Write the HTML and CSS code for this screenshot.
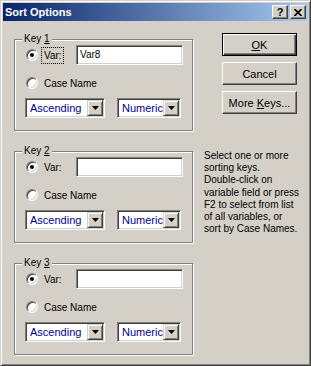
FILE: index.html
```html
<!DOCTYPE html>
<html lang="en">
<head>
    <meta charset="UTF-8">
    <meta name="viewport" content="width=device-width, initial-scale=1.0">
    <title>Sort Options</title>
    <link rel="stylesheet" href="styles.css">
</head>
<body>
    <div class="window">
        <div class="titlebar">
            <span class="title">Sort Options</span>
            <div class="caption-buttons">
                <span class="cap-btn help">?</span>
                <span class="cap-btn close">
                    <svg width="8" height="7" viewBox="0 0 8 7"><path d="M0.5 0 L7.5 7 M7.5 0 L0.5 7" stroke="#000" stroke-width="1.7"/></svg>
                </span>
            </div>
        </div>

        <div class="body">
            <div class="keys">
                <div class="group">
                    <span class="group-title">Key <u>1</u></span>
                    <div class="row">
                        <span class="radio checked"></span>
                        <span class="label focus">Var:</span>
                        <span class="textbox">Var8</span>
                    </div>
                    <div class="row">
                        <span class="radio"></span>
                        <span class="label">Case Name</span>
                    </div>
                    <div class="row combos">
                        <div class="combo wide">
                            <span class="combo-text">Ascending</span>
                            <span class="combo-btn"><svg width="7" height="4" viewBox="0 0 7 4"><path d="M0 0 H7 L3.5 4 Z" fill="#000"/></svg></span>
                        </div>
                        <div class="combo narrow">
                            <span class="combo-text">Numeric</span>
                            <span class="combo-btn"><svg width="7" height="4" viewBox="0 0 7 4"><path d="M0 0 H7 L3.5 4 Z" fill="#000"/></svg></span>
                        </div>
                    </div>
                </div>

                <div class="group">
                    <span class="group-title">Key <u>2</u></span>
                    <div class="row">
                        <span class="radio checked"></span>
                        <span class="label">Var:</span>
                        <span class="textbox"></span>
                    </div>
                    <div class="row">
                        <span class="radio"></span>
                        <span class="label">Case Name</span>
                    </div>
                    <div class="row combos">
                        <div class="combo wide">
                            <span class="combo-text">Ascending</span>
                            <span class="combo-btn"><svg width="7" height="4" viewBox="0 0 7 4"><path d="M0 0 H7 L3.5 4 Z" fill="#000"/></svg></span>
                        </div>
                        <div class="combo narrow">
                            <span class="combo-text">Numeric</span>
                            <span class="combo-btn"><svg width="7" height="4" viewBox="0 0 7 4"><path d="M0 0 H7 L3.5 4 Z" fill="#000"/></svg></span>
                        </div>
                    </div>
                </div>

                <div class="group">
                    <span class="group-title">Key <u>3</u></span>
                    <div class="row">
                        <span class="radio checked"></span>
                        <span class="label">Var:</span>
                        <span class="textbox"></span>
                    </div>
                    <div class="row">
                        <span class="radio"></span>
                        <span class="label">Case Name</span>
                    </div>
                    <div class="row combos">
                        <div class="combo wide">
                            <span class="combo-text">Ascending</span>
                            <span class="combo-btn"><svg width="7" height="4" viewBox="0 0 7 4"><path d="M0 0 H7 L3.5 4 Z" fill="#000"/></svg></span>
                        </div>
                        <div class="combo narrow">
                            <span class="combo-text">Numeric</span>
                            <span class="combo-btn"><svg width="7" height="4" viewBox="0 0 7 4"><path d="M0 0 H7 L3.5 4 Z" fill="#000"/></svg></span>
                        </div>
                    </div>
                </div>
            </div>

            <div class="side">
                <button class="btn default"><u>O</u>K</button>
                <button class="btn">Cancel</button>
                <button class="btn">More <u>K</u>eys...</button>
                <p class="hint">Select one or more<br>sorting keys.<br>Double-click on<br>variable field or press<br>F2 to select from list<br>of all variables, or<br>sort by Case Names.</p>
            </div>
        </div>
    </div>
</body>
</html>
```

FILE: styles.css
```css
body {
    margin: 0;
    font-family: "Liberation Sans", Arial, sans-serif;
    font-size: 10px;
    color: #000;
    background-color: #d4d0c8;
}

.window {
    width: 311px;
    height: 366px;
    box-sizing: border-box;
    border: 1px solid;
    border-color: #d4d0c8 #404040 #404040 #d4d0c8;
    box-shadow: inset 1px 1px #fff, inset -1px -1px #808080;
    padding: 2px;
    background-color: #d4d0c8;
    display: flex;
    flex-direction: column;
}

/* Title bar */
.titlebar {
    height: 18px;
    display: flex;
    align-items: center;
    justify-content: space-between;
    background: linear-gradient(to right, #0a246a, #a6caf0);
}

.title {
    padding-left: 2px;
    color: #fff;
    font-weight: bold;
    font-size: 11px;
}

.caption-buttons {
    display: flex;
    gap: 2px;
    margin-right: 2px;
}

.cap-btn {
    width: 16px;
    height: 14px;
    box-sizing: border-box;
    display: flex;
    align-items: center;
    justify-content: center;
    background-color: #d4d0c8;
    border: 1px solid;
    border-color: #fff #404040 #404040 #fff;
    box-shadow: inset -1px -1px #808080;
    font-weight: bold;
    font-size: 11px;
    line-height: 1;
}

/* Dialog body */
.body {
    display: flex;
    flex: 1;
}

.keys {
    padding: 18px 0 0 11px;
    width: 180px;
    display: flex;
    flex-direction: column;
    gap: 20px;
}

.group {
    width: 179px;
    height: 92px;
    box-sizing: border-box;
    border: 1px solid #808080;
    box-shadow: inset 1px 1px #fff, 1px 1px #fff;
    padding: 0 0 0 10px;
    display: flex;
    flex-direction: column;
}

.group-title {
    align-self: flex-start;
    margin: -7px 0 0 -3px;
    padding: 0 2px;
    line-height: 12px;
    background-color: #d4d0c8;
}

.row {
    display: flex;
    align-items: center;
    height: 20px;
}

.row:nth-of-type(2) {
    margin-top: 8px;
}

.row:nth-of-type(3) {
    margin-top: 3px;
}

.row.combos {
    margin-top: 5px;
    gap: 12px;
}

.radio {
    position: relative;
    width: 12px;
    height: 12px;
    margin-left: 1px;
    box-sizing: border-box;
    border-radius: 50%;
    border: 1px solid;
    border-color: #808080 #fff #fff #808080;
    background-color: #fff;
    box-shadow: inset 1px 1px #404040, inset -1px -1px #d4d0c8;
}

.radio.checked::after {
    content: "";
    position: absolute;
    left: 3px;
    top: 3px;
    width: 4px;
    height: 4px;
    border-radius: 50%;
    background-color: #000;
}

.label {
    margin-left: 3px;
    padding: 2px 2px;
    width: 17px;
    border: 1px solid transparent;
    white-space: nowrap;
}

.label.focus {
    border: 1px dotted #000;
}

.textbox,
.combo {
    height: 20px;
    box-sizing: border-box;
    border: 1px solid;
    border-color: #808080 #fff #fff #808080;
    box-shadow: inset 1px 1px #404040, inset -1px -1px #d4d0c8;
    background-color: #fff;
}

.textbox {
    width: 107px;
    margin-left: 12px;
    padding: 3px 0 0 3px;
}

.combo {
    display: flex;
    align-items: center;
    justify-content: space-between;
    padding: 1px;
}

.combo.wide {
    width: 80px;
}

.combo.narrow {
    width: 64px;
}

.combo-text {
    padding-left: 3px;
    color: #000090;
    font-size: 11px;
}

.combo-btn {
    width: 16px;
    height: 16px;
    box-sizing: border-box;
    display: flex;
    align-items: center;
    justify-content: center;
    background-color: #d4d0c8;
    border: 1px solid;
    border-color: #d4d0c8 #404040 #404040 #d4d0c8;
    box-shadow: inset 1px 1px #fff, inset -1px -1px #808080;
}

/* Right column */
.side {
    margin-left: 10px;
    padding-top: 12px;
    display: flex;
    flex-direction: column;
    align-items: flex-start;
}

.btn {
    width: 75px;
    height: 23px;
    margin: 0 0 6px 18px;
    padding: 0;
    box-sizing: border-box;
    font-family: "Liberation Sans", Arial, sans-serif;
    font-size: 11px;
    color: #000;
    background-color: #d4d0c8;
    border: 1px solid;
    border-color: #fff #404040 #404040 #fff;
    box-shadow: inset -1px -1px #808080;
}

.btn.default {
    border-color: #000;
    box-shadow: inset 1px 1px #fff, inset -1px -1px #404040, inset -2px -2px #808080;
}

.hint {
    margin: 30px 0 0;
    line-height: 12.2px;
    white-space: nowrap;
}
```
